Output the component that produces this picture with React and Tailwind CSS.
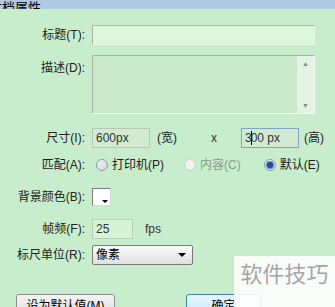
import React from "react";

const F = { fontFamily: '"Liberation Sans", "Noto Sans CJK SC", sans-serif' };

function Label({ children, className = "" }) {
  return (
    <div className={"w-[86px] shrink-0 text-right pr-[1px] text-[12px] text-[#222] " + className}>
      {children}
    </div>
  );
}

function Radio({ checked, disabled }) {
  return (
    <span
      className={
        "inline-flex h-[12px] w-[12px] items-center justify-center rounded-full border " +
        (disabled ? "border-[#c9d3c9] bg-[#eef4ee]" : "border-[#8a9aa8] bg-gradient-to-br from-[#f4f4f4] to-[#d0d4d8]")
      }
    >
      {checked && <span className="h-[6px] w-[6px] rounded-full bg-[#1f4f8a] shadow-[0_0_0_1px_#5a8fd0]" />}
    </span>
  );
}

export default function App() {
  return (
    <div style={F} className="relative h-[307px] w-[335px] overflow-hidden bg-[#c7edcc] text-[12px] text-[#222]">
      <div className="flex h-[9px] items-end overflow-hidden bg-[#b2c9e3]">
        <span className="ml-[-11px] translate-y-[5px] text-[13px] leading-[13px] text-black">文档属性</span>
      </div>

      <div className="flex flex-col">
        {/* title */}
        <div className="mt-[16px] flex items-center gap-[6px]">
          <Label>标题(T):</Label>
          <div className="h-[20px] w-[223px] border border-t-[#a8b4a8] border-l-[#a8b4a8] border-r-[#e8f4e8] border-b-[#f0f8f0] bg-[#dcf8dc]" />
        </div>

        {/* description */}
        <div className="mt-[10px] flex items-start gap-[6px]">
          <Label className="mt-[4px]">描述(D):</Label>
          <div className="flex h-[59px] w-[223px] border border-t-[#a8b4a8] border-l-[#a8b4a8] border-r-[#f4faf4] border-b-[#f4faf4] bg-[#c9e8c9]">
            <div className="flex-1" />
            <div className="flex w-[17px] flex-col items-center justify-between bg-[#e4f4e4] py-[4px] text-[7px] leading-none text-[#888]">
              <span>▲</span>
              <span>▼</span>
            </div>
          </div>
        </div>

        {/* size */}
        <div className="mt-[14px] flex items-center gap-[6px]">
          <Label>尺寸(I):</Label>
          <div className="flex h-[20px] w-[58px] items-center border border-[#b4c8b4] bg-[#d2ead2] pl-[3px] text-[12px] text-[#333]">600px</div>
          <span className="ml-[1px] text-[12px]">(宽)</span>
          <span className="ml-[28px] text-[12px] text-[#333]">x</span>
          <div className="ml-[18px] flex h-[20px] w-[58px] items-center border border-[#7fa8c0] bg-[#d2ead2] pl-[3px] text-[12px] text-[#333]">
            3<span className="mx-[-1px] inline-block h-[14px] w-[1px] bg-black" />00 px
          </div>
          <span className="ml-[-1px] text-[12px]">(高)</span>
        </div>

        {/* match */}
        <div className="mt-[8px] flex items-center gap-[6px]">
          <Label>匹配(A):</Label>
          <div className="flex items-center gap-[4px] pl-[4px]">
            <Radio />
            <span className="text-[12px]">打印机(P)</span>
          </div>
          <div className="ml-[14px] flex items-center gap-[4px]">
            <Radio disabled />
            <span className="text-[12px] text-[#8a9a8a]">内容(C)</span>
          </div>
          <div className="ml-[17px] flex items-center gap-[4px]">
            <Radio checked />
            <span className="text-[12px]">默认(E)</span>
          </div>
        </div>

        {/* bg color */}
        <div className="mt-[14px] flex items-center gap-[6px]">
          <Label>背景颜色(B):</Label>
          <div className="relative h-[18px] w-[19px] border border-t-[#7a7a7a] border-l-[#7a7a7a] border-r-[#d8d8d8] border-b-[#d8d8d8] bg-white">
            <span className="absolute bottom-[2px] right-[2px] h-0 w-0 border-l-[3px] border-r-[3px] border-t-[3px] border-l-transparent border-r-transparent border-t-black" />
          </div>
        </div>

        {/* fps */}
        <div className="mt-[13px] flex items-center gap-[6px]">
          <Label>帧频(F):</Label>
          <div className="flex h-[20px] w-[41px] items-center border border-[#b8d0b8] bg-[#d6f4d6] pl-[3px] text-[12px] text-[#333]">25</div>
          <span className="ml-[6px] text-[12px] text-[#333]">fps</span>
        </div>

        {/* ruler */}
        <div className="mt-[6px] flex items-center gap-[6px]">
          <Label>标尺单位(R):</Label>
          <div className="flex h-[20px] w-[101px] items-center justify-between rounded-[2px] border border-[#7a7a7a] bg-gradient-to-b from-[#fbfbfb] to-[#e0e0e0] pl-[3px] pr-[6px] text-[12px] text-black">
            <span>像素</span>
            <span className="h-0 w-0 border-l-[4px] border-r-[4px] border-t-[4px] border-l-transparent border-r-transparent border-t-black" />
          </div>
        </div>

        {/* buttons */}
        <div className="mt-[29px] flex items-start">
          <div className="ml-[16px] flex h-[24px] w-[99px] items-start justify-center rounded-[3px] border border-[#8e8f8f] bg-gradient-to-b from-[#f4f4f4] to-[#dcdcdc] pt-[2px] text-[12px] text-black">
            设为默认值(M)
          </div>
          <div className="ml-[71px] flex h-[24px] w-[75px] items-start justify-center rounded-[3px] border border-[#3c7fb1] bg-gradient-to-b from-[#eaf6fd] to-[#bee6fd] pt-[2px] text-[12px] text-black">
            确定
          </div>
        </div>
      </div>

      <div className="absolute left-[234px] top-[256px] flex h-[51px] w-[101px] items-start justify-center bg-white/90 pt-[6px] text-[22px] leading-[26px] text-[#a6a6a6]">
        软件技巧
      </div>
    </div>
  );
}
